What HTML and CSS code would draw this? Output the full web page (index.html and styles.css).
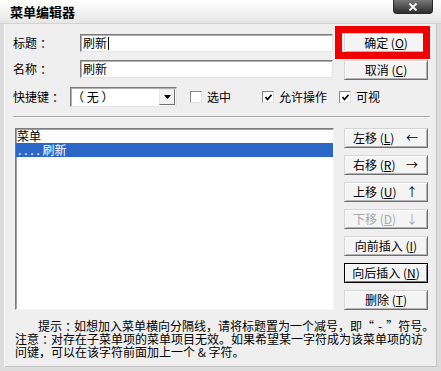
FILE: index.html
```html
<!DOCTYPE html>
<html lang="zh-CN">
<head>
  <meta charset="UTF-8">
  <title>菜单编辑器</title>
  <link rel="stylesheet" href="styles.css">
</head>
<body>
  <div class="window">
    <div class="titlebar">
      <span class="title">菜单编辑器</span>
      <span class="close">
        <svg width="10" height="8" viewBox="0 0 10 8"><path d="M1.5 0.5 L8.5 7.5 M8.5 0.5 L1.5 7.5" stroke="#f4f4f4" stroke-width="2" fill="none"/></svg>
      </span>
    </div>

    <div class="client">
      <div class="top">
        <div class="fields">
          <div class="field">
            <span class="label">标题<span class="colon">：</span></span>
            <div class="edit">刷新<span class="caret"></span></div>
          </div>
          <div class="field">
            <span class="label">名称<span class="colon">：</span></span>
            <div class="edit">刷新</div>
          </div>
        </div>
        <div class="top-buttons">
          <div class="ok-wrap">
            <button class="btn">确定 (<u>O</u>)</button>
            <span class="mark"></span>
          </div>
          <button class="btn">取消 (<u>C</u>)</button>
        </div>
      </div>

      <div class="opts">
        <span class="label label-key">快捷键<span class="colon">：</span></span>
        <div class="combo">
          <span class="combo-text">（ 无 ）</span>
          <span class="combo-btn">
            <svg width="7" height="4" viewBox="0 0 7 4"><polygon points="0,0 7,0 3.5,4" fill="#000"/></svg>
          </span>
        </div>
        <label class="check check-sel"><span class="box"></span>选中</label>
        <label class="check check-enable"><span class="box"><svg width="7" height="7" viewBox="0 0 7 7"><path d="M0.5 3 L2.5 5.5 L6.5 0.8" stroke="#000" stroke-width="1.6" fill="none"/></svg></span>允许操作</label>
        <label class="check check-visible"><span class="box"><svg width="7" height="7" viewBox="0 0 7 7"><path d="M0.5 3 L2.5 5.5 L6.5 0.8" stroke="#000" stroke-width="1.6" fill="none"/></svg></span>可视</label>
      </div>

      <div class="sep"></div>

      <div class="middle">
        <div class="list">
          <div class="item">菜单</div>
          <div class="item selected"><span class="dots">....</span>刷新</div>
        </div>
        <div class="side">
          <button class="btn btn-move"><span>左移 (<u>L</u>)</span><span class="arrow">←</span></button>
          <button class="btn btn-move"><span>右移 (<u>R</u>)</span><span class="arrow">→</span></button>
          <button class="btn btn-move"><span>上移 (<u>U</u>)</span><span class="arrow">↑</span></button>
          <button class="btn btn-move disabled"><span>下移 (<u>D</u>)</span><span class="arrow">↓</span></button>
          <button class="btn">向前插入 (<u>I</u>)</button>
          <button class="btn btn-default">向后插入 (<u>N</u>)</button>
          <button class="btn">删除 (<u>T</u>)</button>
        </div>
      </div>

      <p class="hint">提示<span class="colon">：</span>如想加入菜单横向分隔线，请将标题置为一个减号，即“<span class="dash">-</span>”符号。<br>注意<span class="colon">：</span>对存在子菜单项的菜单项目无效。如果希望某一字符成为该菜单项的访<br>问键，可以在该字符前面加上一个 &amp; 字符。</p>
    </div>
  </div>
</body>
</html>
```

FILE: styles.css
```css
body {
  margin: 0;
  font-family: "Noto Sans CJK SC", "Noto Sans", sans-serif;
  font-size: 12px;
  color: #000;
  background: #efefef;
}

.window {
  width: 441px;
  height: 371px;
  display: flex;
  flex-direction: column;
  background: #efefef;
}

.titlebar {
  height: 24px;
  box-sizing: border-box;
  display: flex;
  justify-content: space-between;
  padding-left: 10px;
  background: linear-gradient(#ffffff, #e6e6e6);
  border-bottom: 1px solid #d2d2d2;
}

.title {
  font-size: 13px;
  font-weight: bold;
  line-height: 24px;
}

.close {
  width: 40px;
  height: 14px;
  box-sizing: border-box;
  margin-right: 8px;
  display: flex;
  align-items: center;
  justify-content: center;
  background: linear-gradient(#777777, #2e2e2e);
  border: 1px solid #2a2a2a;
  border-top: 0;
  border-radius: 0 0 4px 4px;
}

.client {
  flex: 1;
  border: 4px solid #dcdcdc;
  border-top: 0;
  box-shadow: inset 1px 0 #f8f8f8, inset -1px -1px #c4c4c4;
  padding: 6px 7px 0 9px;
}

.top {
  display: flex;
  justify-content: space-between;
}

.fields {
  width: 320px;
}

.field {
  display: flex;
  align-items: center;
  height: 26px;
}

.label {
  width: 67px;
  flex-shrink: 0;
  line-height: 14px;
}

.label-key {
  width: 57px;
}

/* full-width colon sits in the middle of its cell in the dialog font */
.colon {
  margin-left: 3px;
  margin-right: -3px;
}

.edit {
  flex: 1;
  height: 18px;
  box-sizing: border-box;
  background: #fff;
  border: 1px solid;
  border-color: #7c7c7c #e4e4e4 #e4e4e4 #7c7c7c;
  box-shadow: inset 1px 1px #b0b0b0;
  padding-left: 2px;
  line-height: 16px;
  display: flex;
  align-items: center;
}

.caret {
  width: 1px;
  height: 13px;
  background: #000;
  margin-left: 1px;
}

.top-buttons {
  width: 84px;
  margin-right: 2px;
  padding-top: 3px;
  display: flex;
  flex-direction: column;
  gap: 7px;
}

.ok-wrap {
  position: relative;
  height: 20px;
}

.ok-wrap .btn {
  width: 100%;
}

.mark {
  position: absolute;
  left: -9px;
  top: -7px;
  width: 95px;
  height: 33px;
  box-sizing: border-box;
  border: 7px solid #f00000;
}

.btn {
  height: 20px;
  box-sizing: border-box;
  padding: 0;
  font-family: inherit;
  font-size: 12px;
  line-height: 14px;
  color: #000;
  background: #f4f4f4;
  border: 1px solid;
  border-color: #d4d4d4 #6e6e6e #6e6e6e #d4d4d4;
  box-shadow: inset 1px 1px #ffffff, inset -1px -1px #b4b4b4;
}

.btn u {
  text-underline-offset: 1px;
}

.btn-move {
  display: flex;
  align-items: center;
  justify-content: space-between;
  padding: 0 9px 0 8px;
}

.arrow {
  font-size: 12px;
}

.disabled {
  color: #a8a8a8;
}

.btn-default {
  border-color: #000;
  box-shadow: inset 1px 1px #ffffff, inset -1px -1px #7a7a7a;
}

.opts {
  display: flex;
  align-items: center;
  height: 20px;
  margin-top: 5px;
}

.combo {
  width: 107px;
  height: 20px;
  box-sizing: border-box;
  display: flex;
  align-items: center;
  justify-content: space-between;
  background: #fff;
  border: 1px solid;
  border-color: #7c7c7c #e4e4e4 #e4e4e4 #7c7c7c;
  box-shadow: inset 1px 1px #b0b0b0;
  padding: 1px;
}

.combo-text {
  line-height: 14px;
  white-space: pre;
}

.combo-btn {
  width: 16px;
  height: 16px;
  box-sizing: border-box;
  display: flex;
  align-items: center;
  justify-content: center;
  background: #f2f2f2;
  border: 1px solid;
  border-color: #e8e8e8 #6e6e6e #6e6e6e #e8e8e8;
}

.check {
  display: flex;
  align-items: center;
  gap: 5px;
  line-height: 14px;
}

.check-sel {
  margin-left: 13px;
}

.check-enable {
  margin-left: 31px;
}

.check-visible {
  margin-left: 12px;
}

.box {
  width: 12px;
  height: 12px;
  box-sizing: border-box;
  display: flex;
  align-items: center;
  justify-content: center;
  background: #fff;
  border: 1px solid;
  border-color: #8a8a8a #e0e0e0 #e0e0e0 #8a8a8a;
}

.sep {
  margin-top: 9px;
  border-top: 1px solid #a6a6a6;
  border-bottom: 1px solid #ffffff;
}

.middle {
  display: flex;
  justify-content: space-between;
  margin-top: 10px;
}

.list {
  width: 319px;
  height: 182px;
  box-sizing: border-box;
  margin-left: 2px;
  background: #fff;
  border: 1px solid;
  border-color: #7c7c7c #f4f4f4 #f4f4f4 #7c7c7c;
  box-shadow: inset 1px 1px #a0a0a0;
}

.item {
  height: 14px;
  line-height: 14px;
  padding-left: 1px;
}

.selected {
  background: #2b67c6;
  color: #fff;
}

.dots {
  letter-spacing: 2.8px;
  margin-left: 1px;
}

.side {
  width: 84px;
  margin-right: 2px;
  display: flex;
  flex-direction: column;
  gap: 7px;
}

.hint {
  margin: 9px 0 0;
  padding-left: 2px;
  line-height: 13px;
  white-space: nowrap;
  text-indent: 23px;
}

.dash {
  margin: 0 4px;
}
```
